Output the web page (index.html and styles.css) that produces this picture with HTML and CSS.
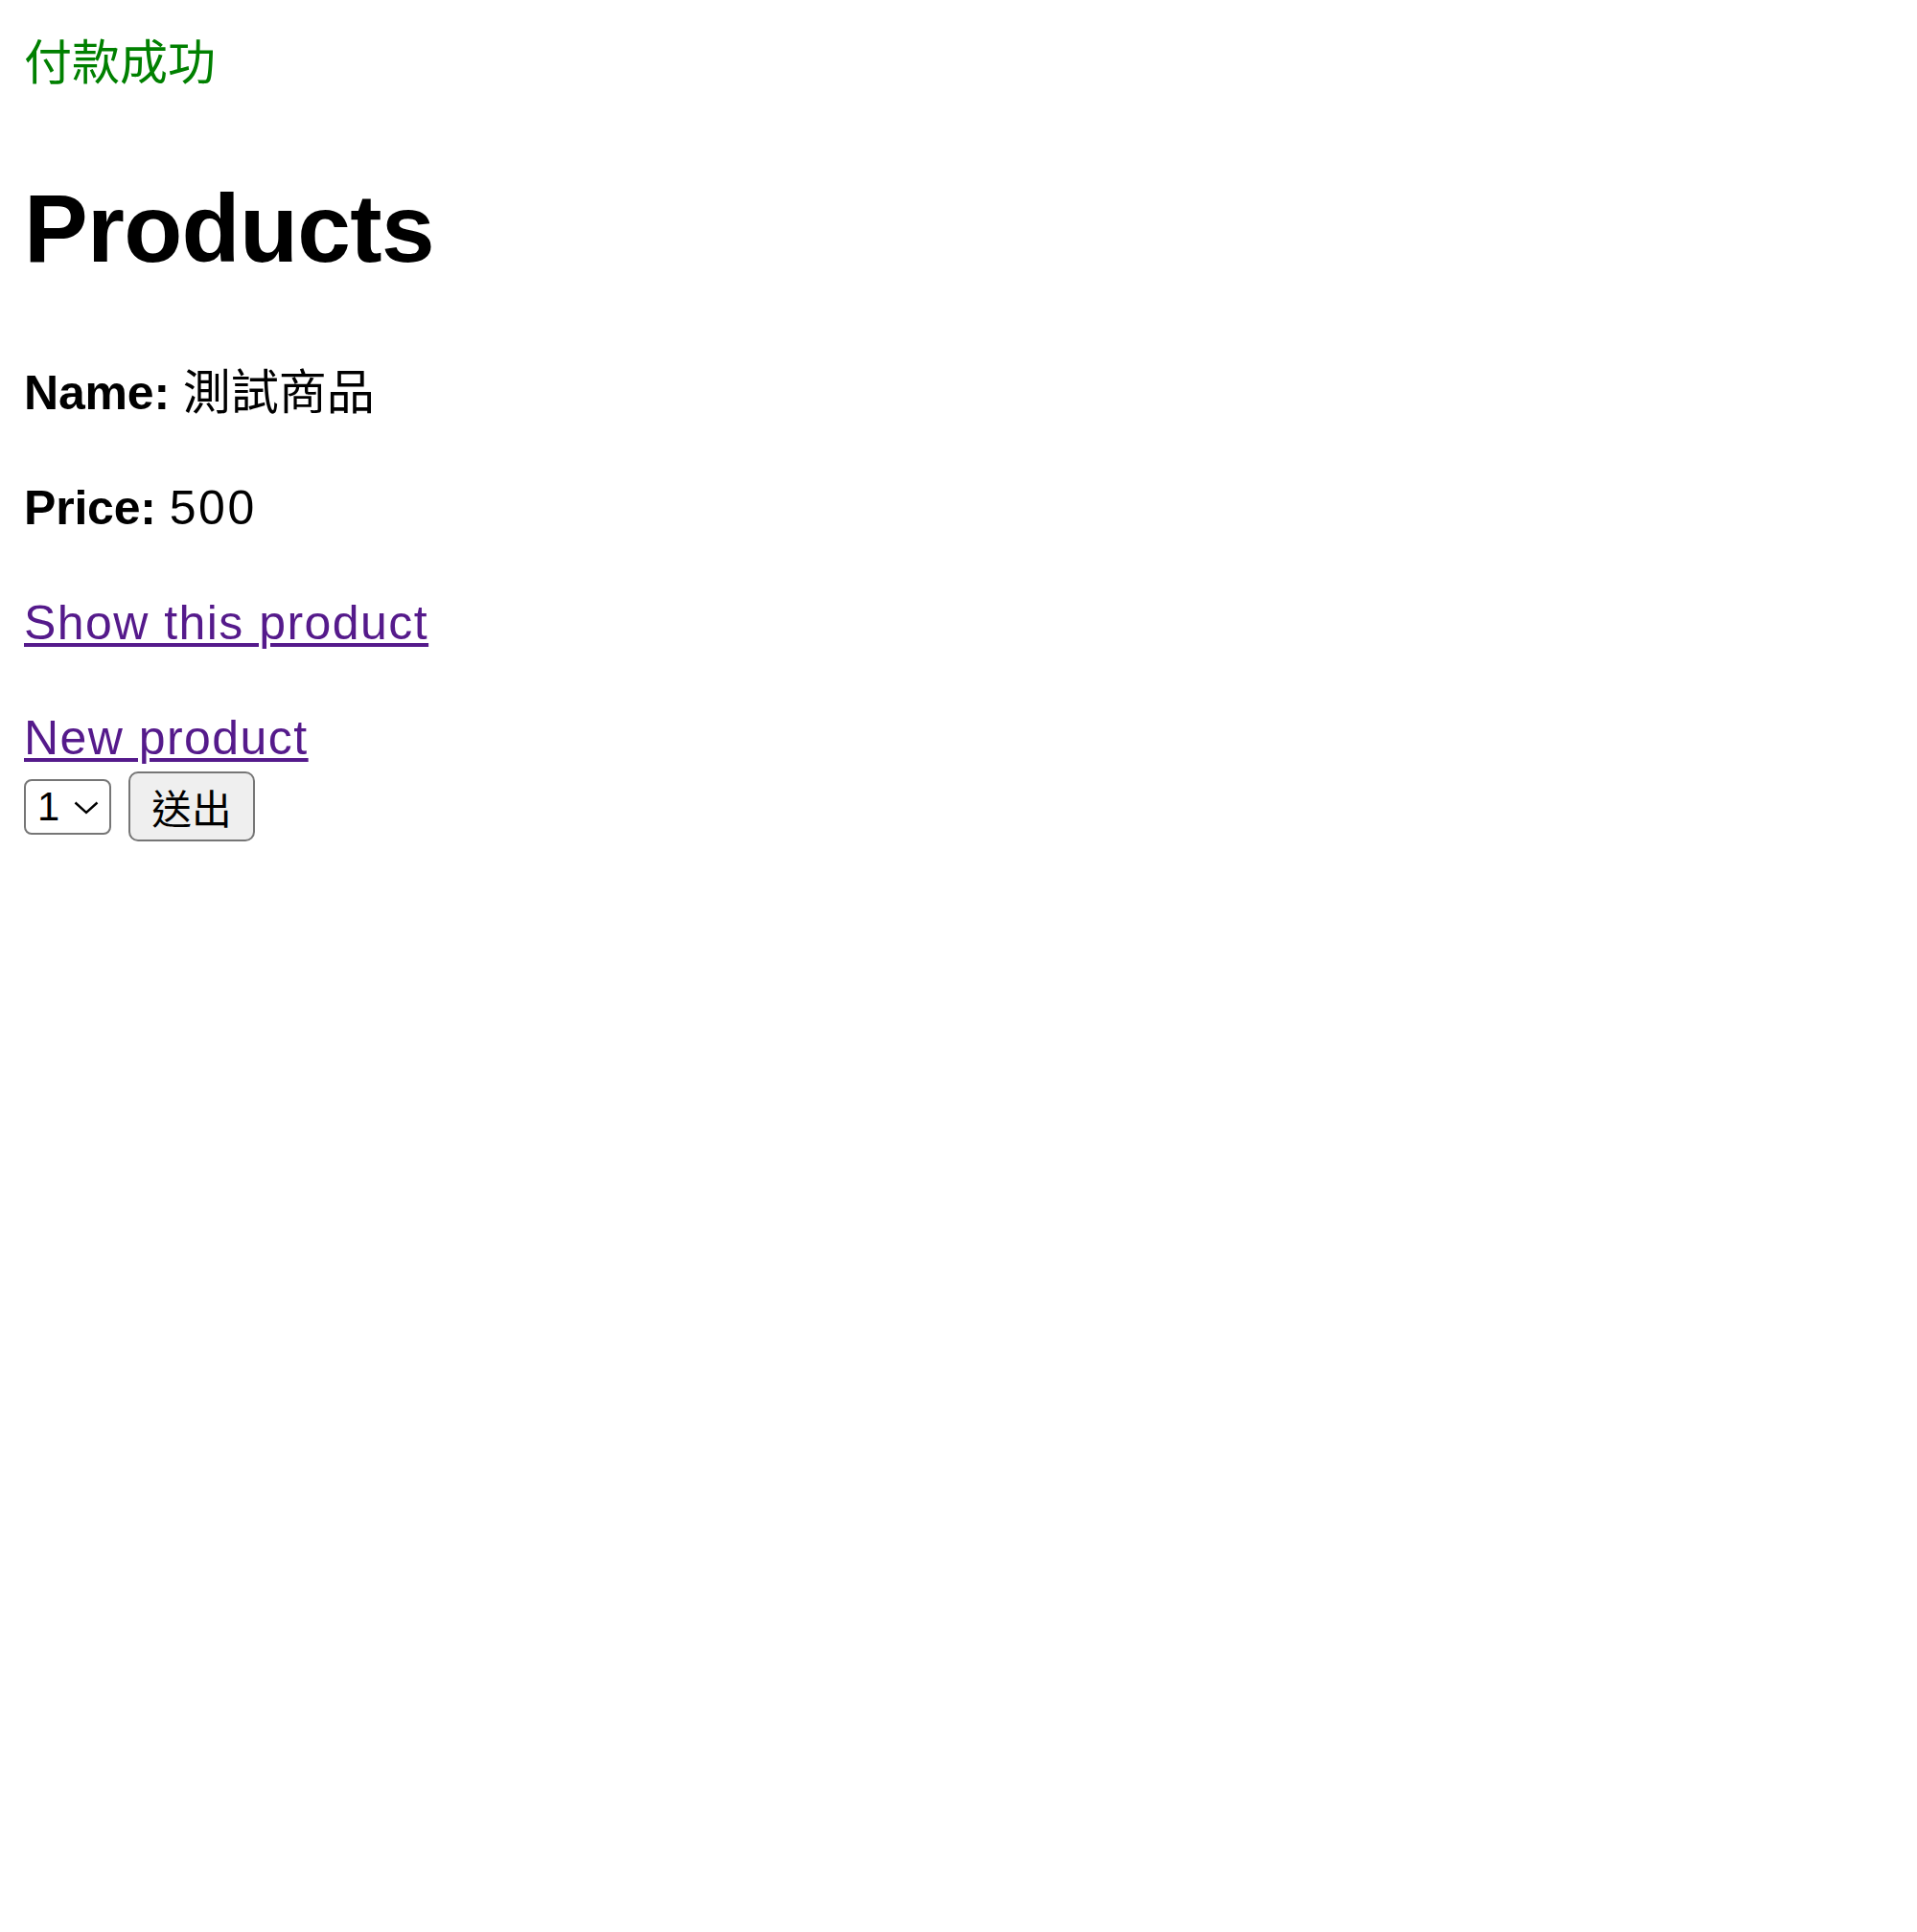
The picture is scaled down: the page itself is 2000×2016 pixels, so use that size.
FILE: index.html
```html
<!DOCTYPE html>
<html lang="zh-Hant">
<head>
<meta charset="utf-8">
<title>Products</title>
<link rel="stylesheet" href="styles.css">
</head>
<body>
<p class="notice">付款成功</p>
<h1 class="title">Products</h1>
<div class="products">
  <div class="product">
    <p class="field"><strong class="label">Name:</strong> 測試商品</p>
    <p class="field"><strong class="label">Price:</strong> <span class="num">500</span></p>
  </div>
  <p class="field"><a class="link" href="#">Show this product</a></p>
</div>
<a class="link" href="#">New product</a>
<form class="buy-form" onsubmit="return false">
  <span class="select-wrap">
    <select class="qty">
      <option>1</option>
      <option>2</option>
      <option>3</option>
    </select>
    <svg class="chevron" width="26" height="14" viewBox="0 0 26 14"><path d="M1.5 1.5 L13 12 L24.5 1.5" fill="none" stroke="#000" stroke-width="2.4"/></svg>
  </span>
  <button class="submit" type="submit">送出</button>
</form>
</body>
</html>
```
FILE: styles.css
```css
html {
  background: #fff;
}
body {
  margin: 0 25px 25px;
  font-family: "Liberation Sans", "Noto Sans CJK TC", sans-serif;
  font-size: 50px;
  line-height: 1.4;
  color: #000;
}
.notice {
  color: #008000;
  margin: 31px 0 50px;
}
.title {
  font-size: 100px;
  font-weight: bold;
  line-height: 140px;
  letter-spacing: -0.7px;
  margin: 67px 0;
}
.field {
  margin: 50px 0;
}
.label {
  font-weight: bold;
  letter-spacing: -0.2px;
}
.num {
  letter-spacing: 2.6px;
}
.link {
  color: #551a8b;
  letter-spacing: 1.45px;
  text-decoration: underline;
  text-decoration-thickness: 4px;
  text-underline-offset: 4px;
}
.buy-form {
  display: flex;
  align-items: center;
  gap: 18px;
  margin: 0;
}
.select-wrap {
  position: relative;
  display: inline-block;
}
.qty {
  appearance: none;
  -webkit-appearance: none;
  box-sizing: border-box;
  width: 91px;
  height: 58px;
  margin: 0;
  padding: 0 0 0 12px;
  border: 2px solid #767676;
  border-radius: 8px;
  background: #fff;
  color: #000;
  font-family: "Liberation Sans", "Noto Sans CJK TC", sans-serif;
  font-size: 41.7px;
  line-height: 54px;
  display: block;
}
.chevron {
  position: absolute;
  left: 52px;
  top: 23px;
  pointer-events: none;
}
.submit {
  box-sizing: border-box;
  width: 132px;
  height: 73px;
  margin: 0;
  padding: 0;
  border: 2px solid #767676;
  border-radius: 10px;
  background: #efefef;
  color: #000;
  font-family: "Liberation Sans", "Noto Sans CJK TC", sans-serif;
  font-size: 41.7px;
}
```
